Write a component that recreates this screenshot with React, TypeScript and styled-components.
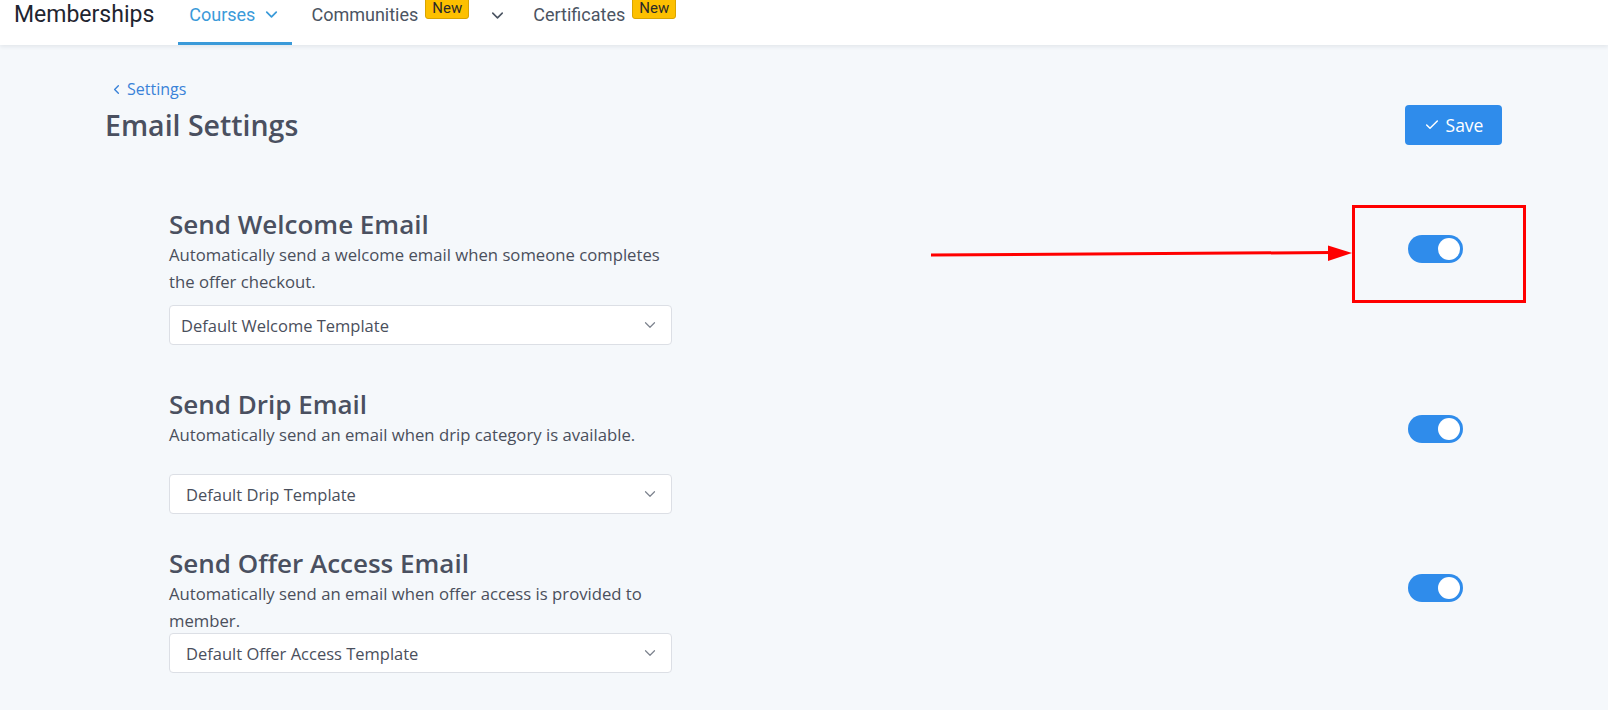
import React from "react";
import styled, { createGlobalStyle } from "styled-components";
import { ChevronDown, ChevronLeft, Check } from "lucide-react";

const GlobalStyle = createGlobalStyle`
  html, body {
    margin: 0;
    padding: 0;
    background: #f5f8fb;
    font-family: "Open Sans", "Noto Sans", sans-serif;
  }
  * { box-sizing: border-box; }
`;

const Page = styled.div`
  position: relative;
  width: 1608px;
  min-height: 710px;
  overflow: hidden;
`;

const TopBar = styled.header`
  height: 45px;
  background: #fff;
  box-shadow: 0 2px 4px rgba(30, 40, 60, 0.08);
  display: flex;
  align-items: stretch;
  padding-left: 14px;
  font-family: Roboto, "Liberation Sans", sans-serif;
`;

const Brand = styled.div`
  font-size: 23px;
  color: #1f2530;
  line-height: 30px;
  margin-right: 24px;
`;

const NavItem = styled.div<{ $active?: boolean }>`
  position: relative;
  display: flex;
  align-items: flex-start;
  gap: 7px;
  height: 45px;
  padding: 4px 11px 0;
  margin-right: 8px;
  font-size: 18px;
  line-height: 22px;
  color: ${p => (p.$active ? "#3a9ad9" : "#4b5462")};
  border-bottom: 3px solid ${p => (p.$active ? "#3a9ad9" : "transparent")};
  svg { margin-top: 1px; }
`;

const Badge = styled.span`
  position: relative;
  top: -7px;
  height: 22px;
  padding: 0 6px;
  background: #fdc000;
  border: 1px solid #d9a400;
  border-radius: 3px;
  font-size: 15px;
  line-height: 20px;
  color: #2a2a2a;
`;

const Caret = styled.div`
  display: flex;
  align-items: flex-start;
  padding: 6px 15px 0 0;
  color: #4b5462;
`;

const Content = styled.main`
  padding: 33px 106px 40px 105px;
`;

const BackLink = styled.a`
  display: flex;
  align-items: center;
  gap: 3px;
  height: 22px;
  margin-left: 4px;
  font-size: 16px;
  color: #3a82d8;
  text-decoration: none;
`;

const HeadRow = styled.div`
  display: flex;
  align-items: center;
  justify-content: space-between;
  margin-top: 5px;
`;

const PageTitle = styled.h1`
  margin: 0;
  font-size: 28.5px;
  font-weight: 600;
  line-height: 40px;
  color: #4a5060;
`;

const SaveButton = styled.button`
  display: flex;
  align-items: center;
  justify-content: center;
  gap: 6px;
  width: 97px;
  height: 40px;
  border: none;
  border-radius: 4px;
  background: #2f8ceb;
  color: #fff;
  font-family: inherit;
  font-size: 17.5px;
`;

const SectionList = styled.div`
  display: flex;
  flex-direction: column;
  gap: 34px;
  margin-top: 64px;
`;

const Section = styled.section<{ $roomy?: boolean }>`
  display: grid;
  grid-template-columns: 503px 1fr auto;
  padding: 0 39px ${p => (p.$roomy ? "10px" : "0")} 64px;
`;

const Info = styled.div`
  display: flex;
  flex-direction: column;
`;

const Title = styled.h2`
  margin: 0;
  font-size: 26px;
  font-weight: 600;
  line-height: 30px;
  color: #4a5060;
`;

const Desc = styled.p`
  margin: 2px 0 0;
  height: 54px;
  font-size: 16.7px;
  line-height: 27px;
  color: #4a4f5c;
`;

const Select = styled.div<{ $roomy?: boolean; $inset: number }>`
  display: flex;
  align-items: center;
  justify-content: space-between;
  height: 40px;
  margin-top: ${p => (p.$roomy ? "10px" : "-1px")};
  padding: 0 12px 0 ${p => p.$inset}px;
  background: #fff;
  border: 1px solid #dcdfe5;
  border-radius: 4px;
  font-size: 16.5px;
  color: #4a4f5c;
  svg { color: #7d838e; }
`;

const Toggle = styled.div<{ $on: boolean }>`
  grid-column: 3;
  position: relative;
  width: 55px;
  height: 28px;
  margin-top: 26px;
  border-radius: 14px;
  background: ${p => (p.$on ? "#2f8ceb" : "#cfd5dd")};
  &::after {
    content: "";
    position: absolute;
    top: 3px;
    left: ${p => (p.$on ? "30px" : "3px")};
    width: 22px;
    height: 22px;
    border-radius: 50%;
    background: #fff;
  }
`;

const Markup = styled.svg`
  position: absolute;
  inset: 0;
  pointer-events: none;
`;

const settings = [
  {
    title: "Send Welcome Email",
    desc: "Automatically send a welcome email when someone completes the offer checkout.",
    template: "Default Welcome Template",
    inset: 11,
    roomy: true,
  },
  {
    title: "Send Drip Email",
    desc: "Automatically send an email when drip category is available.",
    template: "Default Drip Template",
    inset: 16,
  },
  {
    title: "Send Offer Access Email",
    desc: "Automatically send an email when offer access is provided to member.",
    template: "Default Offer Access Template",
    inset: 16,
  },
];

export default function App() {
  return (
    <Page>
      <GlobalStyle />
      <TopBar>
        <Brand>Memberships</Brand>
        <NavItem $active>
          Courses <ChevronDown size={19} strokeWidth={2.2} />
        </NavItem>
        <NavItem>
          Communities<Badge>New</Badge>
        </NavItem>
        <Caret>
          <ChevronDown size={19} strokeWidth={2} />
        </Caret>
        <NavItem>
          Certificates<Badge>New</Badge>
        </NavItem>
      </TopBar>

      <Content>
        <BackLink href="#">
          <ChevronLeft size={15} strokeWidth={2.2} />
          Settings
        </BackLink>
        <HeadRow>
          <PageTitle>Email Settings</PageTitle>
          <SaveButton>
            <Check size={16} strokeWidth={2.2} />
            Save
          </SaveButton>
        </HeadRow>

        <SectionList>
          {settings.map(s => (
            <Section key={s.title} $roomy={s.roomy}>
              <Info>
                <Title>{s.title}</Title>
                <Desc>{s.desc}</Desc>
                <Select $roomy={s.roomy} $inset={s.inset}>
                  {s.template}
                  <ChevronDown size={18} strokeWidth={1.6} />
                </Select>
              </Info>
              <Toggle $on />
            </Section>
          ))}
        </SectionList>
      </Content>

      <Markup width="1608" height="710" viewBox="0 0 1608 710">
        <line x1="931" y1="255" x2="1332" y2="252.5" stroke="#ff0000" strokeWidth="3" />
        <polygon points="1328,245.5 1352,253 1328,261" fill="#ff0000" />
        <rect x="1353.5" y="206.5" width="171" height="95" fill="none" stroke="#ff0000" strokeWidth="3" />
      </Markup>
    </Page>
  );
}
